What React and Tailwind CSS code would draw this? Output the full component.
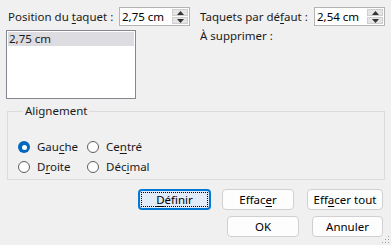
const font = { fontFamily: '"Noto Sans", "Open Sans", sans-serif' }

const U = ({ children }) => <span className="underline underline-offset-2">{children}</span>

const Spin = ({ value }) => (
  <div className="flex h-[19px] w-[71px] items-stretch border border-[#b4b4b4] bg-white">
    <div className="flex flex-1 items-center pl-[2px] text-[11.5px] leading-none text-black">{value}</div>
    <div className="my-[1px] mr-[1px] flex w-[16px] flex-col gap-[1px]">
      <div className="flex flex-1 items-center justify-center border border-[#cfcfcf] bg-[#e5e5e5]">
        <svg width="7" height="4" viewBox="0 0 7 4" aria-hidden="true">
          <path d="M0 4 L3.5 0 L7 4 Z" fill="#333" />
        </svg>
      </div>
      <div className="flex flex-1 items-center justify-center border border-[#cfcfcf] bg-[#e5e5e5]">
        <svg width="7" height="4" viewBox="0 0 7 4" aria-hidden="true">
          <path d="M0 0 L7 0 L3.5 4 Z" fill="#333" />
        </svg>
      </div>
    </div>
  </div>
)

const Radio = ({ checked, children }) => (
  <div className="flex items-center gap-[7px]">
    {checked ? (
      <span className="flex h-[12px] w-[12px] items-center justify-center rounded-full bg-[#0067c0]">
        <span className="h-[5px] w-[5px] rounded-full bg-white" />
      </span>
    ) : (
      <span className="h-[12px] w-[12px] rounded-full border border-[#5d5d5d] bg-white" />
    )}
    <span>{children}</span>
  </div>
)

const Btn = ({ className, children }) => (
  <button
    type="button"
    className={`flex h-[21px] items-center justify-center rounded-[4px] border border-[#d0d0d0] bg-[#fdfdfd] text-[11.5px] leading-none text-black ${className}`}
  >
    {children}
  </button>
)

export default function App() {
  return (
    <div className="relative h-[245px] w-[391px] overflow-hidden bg-[#f0f0f0] text-[11.5px] text-[#1a1a1a]" style={font}>
      <div className="flex pt-[7px]">
        <div className="w-[190px] pl-[6px]">
          <div className="flex h-[19px] items-center">
            <span className="w-[113px] pl-[2px]">
              Position du <U>t</U>aquet :
            </span>
            <Spin value="2,75 cm" />
          </div>
          <div className="mt-[4px] h-[69px] w-[130px] border border-[#828790] bg-white p-[1px]">
            <div className="h-[14px] bg-[#dcdce1] pl-[1px] leading-[14px]">2,75 cm</div>
          </div>
        </div>
        <div className="ml-[10px]">
          <div className="flex h-[19px] items-center">
            <span className="w-[114px]">
              Taquets par dé<U>f</U>aut :
            </span>
            <Spin value="2,54 cm" />
          </div>
          <div className="mt-[1px]">À supprimer :</div>
        </div>
      </div>

      <fieldset className="mx-[7px] mt-[4px] h-[77px] w-[378px] border border-[#dcdcdc] px-[10px]">
        <legend className="ml-[5px] px-[2px] leading-[16px]">Alignement</legend>
        <div className="mt-[22px] grid w-[140px] grid-cols-[69px_1fr] gap-y-[8px] leading-[12px]">
          <Radio checked>
            Gau<U>c</U>he
          </Radio>
          <Radio>
            Ce<U>n</U>tré
          </Radio>
          <Radio>
            D<U>r</U>oite
          </Radio>
          <Radio>
            Déc<U>i</U>mal
          </Radio>
        </div>
      </fieldset>

      <div className="mt-[9px] flex pl-[138px]">
        <button
          type="button"
          className="flex h-[21px] w-[73px] items-center justify-center rounded-[4px] border-2 border-[#0078d4] bg-[#e1ecf8] p-[1px] text-[11.5px] leading-none text-black"
        >
          <span className="flex h-full w-full items-center justify-center border border-dotted border-black">
            <U>D</U>éfinir
          </span>
        </button>
        <Btn className="ml-[11px] w-[72px]">
          Effac<U>e</U>r
        </Btn>
        <Btn className="ml-[13px] w-[76px]">
          Eff<U>a</U>cer tout
        </Btn>
      </div>
      <div className="mt-[6px] flex pl-[227px]">
        <Btn className="w-[72px]">OK</Btn>
        <Btn className="ml-[13px] w-[71px]">Annuler</Btn>
      </div>

      <svg className="absolute bottom-[1px] right-[1px]" width="10" height="10" viewBox="0 0 10 10" aria-hidden="true">
        <rect x="8" y="2" width="1" height="1" fill="#a0a0a0" />
        <rect x="5" y="5" width="1" height="1" fill="#a0a0a0" />
        <rect x="8" y="5" width="1" height="1" fill="#a0a0a0" />
        <rect x="2" y="8" width="1" height="1" fill="#a0a0a0" />
        <rect x="5" y="8" width="1" height="1" fill="#a0a0a0" />
        <rect x="8" y="8" width="1" height="1" fill="#a0a0a0" />
      </svg>
    </div>
  )
}
